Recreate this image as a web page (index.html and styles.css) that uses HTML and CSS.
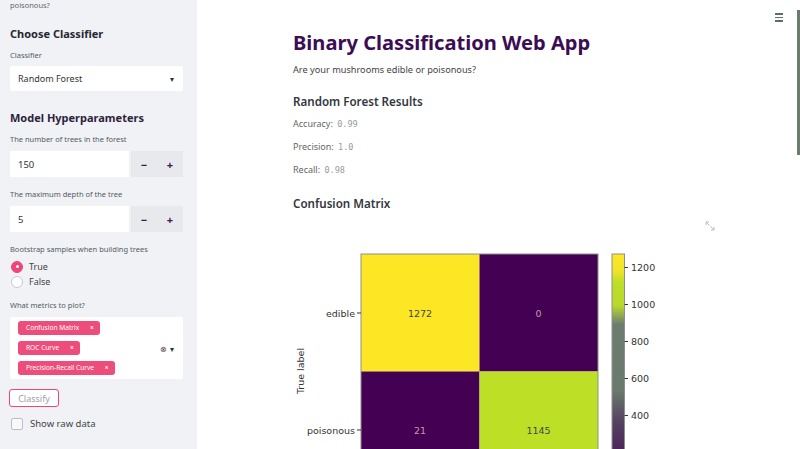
FILE: index.html
```html
<!DOCTYPE html>
<html>
<head>
<meta charset="utf-8">
<link rel="stylesheet" href="styles.css">
</head>
<body>
<div class="app">
  <aside class="sidebar">
    <p class="cut-text">poisonous?</p>
    <h3 class="side-head first">Choose Classifier</h3>
    <div class="label">Classifier</div>
    <div class="select"><span>Random Forest</span><span class="caret">▾</span></div>

    <h3 class="side-head second">Model Hyperparameters</h3>
    <div class="label">The number of trees in the forest</div>
    <div class="number-row">
      <div class="num-input">150</div>
      <div class="stepper"><span>−</span><span>+</span></div>
    </div>
    <div class="label">The maximum depth of the tree</div>
    <div class="number-row">
      <div class="num-input">5</div>
      <div class="stepper"><span>−</span><span>+</span></div>
    </div>

    <div class="label">Bootstrap samples when building trees</div>
    <div class="radio-row"><span class="radio on"></span>True</div>
    <div class="radio-row"><span class="radio"></span>False</div>

    <div class="label metrics-label">What metrics to plot?</div>
    <div class="multi">
      <div class="tags">
        <span class="tag">Confusion Matrix <b>×</b></span>
        <span class="tag">ROC Curve <b>×</b></span>
        <span class="tag">Precision-Recall Curve <b>×</b></span>
      </div>
      <div class="multi-icons"><span class="clear">⊗</span><span class="caret">▾</span></div>
    </div>

    <button class="classify">Classify</button>
    <div class="check-row"><span class="checkbox"></span>Show raw data</div>
  </aside>

  <main class="main">
    <div class="content">
      <h1 class="title">Binary Classification Web App</h1>
      <p class="subtitle">Are your mushrooms edible or poisonous?</p>
      <h3 class="section">Random Forest Results</h3>
      <p class="metric">Accuracy: <code>0.99</code></p>
      <p class="metric">Precision: <code>1.0</code></p>
      <p class="metric">Recall: <code>0.98</code></p>
      <h3 class="section cm">Confusion Matrix</h3>
      <div class="chart">
        <svg class="expand" width="10" height="10" viewBox="0 0 10 10">
          <path d="M1 1 L4 1 M1 1 L1 4 M1 1 L4.5 4.5 M9 9 L6 9 M9 9 L9 6 M9 9 L5.5 5.5" stroke="#b8bcc2" stroke-width="1" fill="none"/>
        </svg>
        <svg class="plot" width="425" height="280" viewBox="0 0 425 280">
          <defs>
            <linearGradient id="cbar" x1="0" y1="0" x2="0" y2="1">
              <stop offset="0" stop-color="#fde725"/>
              <stop offset="0.07" stop-color="#f0e42a"/>
              <stop offset="0.12" stop-color="#bddf26"/>
              <stop offset="0.22" stop-color="#b8d82c"/>
              <stop offset="0.30" stop-color="#6c7c6f"/>
              <stop offset="0.58" stop-color="#6b7a6e"/>
              <stop offset="0.72" stop-color="#54405f"/>
              <stop offset="1" stop-color="#440154"/>
            </linearGradient>
          </defs>
          <rect x="68" y="42" width="118.5" height="117.5" fill="#fde725"/>
          <rect x="186.5" y="42" width="118.5" height="117.5" fill="#440154"/>
          <rect x="68" y="159.5" width="118.5" height="117.5" fill="#440154"/>
          <rect x="186.5" y="159.5" width="118.5" height="117.5" fill="#bddf26"/>
          <rect x="68" y="42" width="237" height="235" fill="none" stroke="#8f8f8f" stroke-width="1"/>
          <line x1="64" y1="101" x2="68" y2="101" stroke="#333" stroke-width="1"/>
          <line x1="64" y1="218" x2="68" y2="218" stroke="#333" stroke-width="1"/>
          <text class="tick" x="62" y="104.5" text-anchor="end">edible</text>
          <text class="tick" x="62" y="221.5" text-anchor="end">poisonous</text>
          <text class="tick" x="0" y="0" text-anchor="middle" transform="translate(11 159) rotate(-90)">True label</text>
          <text class="cell dark" x="127" y="104.5" text-anchor="middle">1272</text>
          <text class="cell light" x="245.5" y="104.5" text-anchor="middle">0</text>
          <text class="cell light" x="127" y="221.5" text-anchor="middle">21</text>
          <text class="cell dark" x="245.5" y="221.5" text-anchor="middle">1145</text>
          <rect x="319" y="42" width="12.5" height="235" fill="url(#cbar)" stroke="#8f8f8f" stroke-width="1"/>
          <g stroke="#333" stroke-width="1">
            <line x1="331.5" y1="55.5" x2="335" y2="55.5"/>
            <line x1="331.5" y1="92.5" x2="335" y2="92.5"/>
            <line x1="331.5" y1="129.5" x2="335" y2="129.5"/>
            <line x1="331.5" y1="166.5" x2="335" y2="166.5"/>
            <line x1="331.5" y1="203.5" x2="335" y2="203.5"/>
          </g>
          <text class="tick" x="338" y="59">1200</text>
          <text class="tick" x="338" y="96">1000</text>
          <text class="tick" x="338" y="133">800</text>
          <text class="tick" x="338" y="170">600</text>
          <text class="tick" x="338" y="207">400</text>
        </svg>
      </div>
    </div>
  </main>

  <div class="hamburger"><span></span><span></span><span></span></div>
  <div class="scroll-thumb"></div>
</div>
</body>
</html>
```

FILE: styles.css
```css
* { box-sizing: border-box; }
html, body {
  margin: 0;
  padding: 0;
  width: 800px;
  height: 449px;
  overflow: hidden;
  background: #ffffff;
  font-family: "Noto Sans", "Open Sans", sans-serif;
}
.app {
  position: relative;
  display: flex;
  width: 800px;
  height: 449px;
  overflow: hidden;
}

/* Sidebar */
.sidebar {
  width: 197px;
  flex: 0 0 197px;
  background: #f0f2f6;
  padding: 0 14px 0 10px;
  display: flex;
  flex-direction: column;
  align-items: flex-start;
}
.cut-text {
  margin: 1px 0 0 0;
  font-size: 7.5px;
  line-height: 9px;
  height: 9px;
  color: #666;
}
.side-head {
  margin: 0;
  font-size: 11px;
  line-height: 14px;
  font-weight: 700;
  color: #262730;
}
.side-head.first { margin-top: 17px; }
.side-head.second { margin-top: 20px; color: #2e1f3c; }
.label {
  font-size: 7.5px;
  line-height: 10px;
  color: #555a60;
  margin-top: 9px;
}
.select {
  width: 173px;
  height: 25px;
  margin-top: 6px;
  background: #fff;
  border-radius: 2px;
  display: flex;
  align-items: center;
  justify-content: space-between;
  padding: 0 9px 0 8px;
  font-size: 9px;
  color: #333;
}
.caret { font-size: 8px; color: #333; }
.number-row {
  display: flex;
  gap: 2px;
  width: 173px;
  height: 26px;
  margin-top: 7px;
  margin-bottom: 3px;
}
.num-input {
  width: 119px;
  background: #fff;
  display: flex;
  align-items: center;
  padding-left: 8px;
  font-size: 9.5px;
  color: #333;
}
.stepper {
  flex: 1;
  background: #e8e9ed;
  display: flex;
  align-items: center;
  justify-content: space-around;
  font-size: 11px;
  font-weight: 700;
  color: #3b1a4f;
}
.radio-row {
  display: flex;
  align-items: center;
  gap: 6px;
  font-size: 9px;
  color: #444;
  height: 15px;
  margin-left: 1px;
}
.label + .radio-row { margin-top: 5px; }
.radio {
  width: 12px;
  height: 12px;
  border-radius: 50%;
  background: #fff;
  border: 1px solid #c8c8c8;
  position: relative;
}
.radio.on {
  background: #f0457a;
  border-color: #f0457a;
}
.radio.on::after {
  content: "";
  position: absolute;
  left: 3.5px;
  top: 3.5px;
  width: 3px;
  height: 3px;
  border-radius: 50%;
  background: #fff;
}
.metrics-label { margin-top: 11px; }
.multi {
  width: 173px;
  height: 62px;
  margin-top: 7px;
  background: #fff;
  border-radius: 2px;
  display: flex;
  align-items: center;
  justify-content: space-between;
  padding: 4px 9px 4px 8px;
}
.tags {
  display: flex;
  flex-direction: column;
  align-items: flex-start;
  gap: 6px;
}
.tag {
  background: #ee4c7a;
  color: #fff;
  font-size: 6.6px;
  line-height: 14px;
  height: 14px;
  border-radius: 3px;
  padding: 0 6px 0 8px;
  white-space: nowrap;
}
.tag b { font-weight: 700; margin-left: 9px; }
.multi-icons {
  display: flex;
  gap: 3px;
  align-items: center;
  color: #444;
}
.multi-icons .clear { font-size: 8px; }
.classify {
  margin-top: 10px;
  margin-left: -1px;
  width: 50px;
  height: 18px;
  background: #fff;
  border: 1px solid #f0457a;
  border-radius: 3px;
  font-family: inherit;
  font-size: 9px;
  color: #a0a0a8;
  padding: 0;
}
.check-row {
  display: flex;
  align-items: center;
  gap: 7px;
  margin-top: 10px;
  margin-left: 1px;
  font-size: 9.5px;
  color: #444;
}
.checkbox {
  width: 12px;
  height: 12px;
  border: 1px solid #bcbcc4;
  border-radius: 2px;
  background: #f8f8fa;
}

/* Main */
.main {
  flex: 1;
  padding: 30px 0 0 96px;
}
.content { width: 425px; }
.title {
  margin: 0;
  font-size: 20.1px;
  line-height: 25px;
  font-weight: 700;
  color: #3b0d54;
}
.subtitle {
  margin: 8px 0 0 0;
  font-size: 9.2px;
  line-height: 14px;
  color: #444;
}
.section {
  margin: 17px 0 0 0;
  font-size: 11.6px;
  line-height: 16px;
  font-weight: 600;
  color: #33373d;
}
.section.cm { margin-top: 19px; }
.metric {
  margin: 9px 0 0 0;
  font-size: 9px;
  line-height: 14px;
  color: #666;
}
.section + .metric { margin-top: 7px; }
code {
  font-family: "DejaVu Sans Mono", "Liberation Mono", monospace;
  font-size: 8.5px;
  color: #999;
  margin-left: 2px;
}
.chart {
  position: relative;
  margin-top: 0;
  height: 280px;
}
.plot { display: block; }
.expand {
  position: absolute;
  right: 3px;
  top: 9px;
}
.tick {
  font-family: "DejaVu Sans", sans-serif;
  font-size: 9.5px;
  fill: #333;
}
.cell {
  font-family: "DejaVu Sans", sans-serif;
  font-size: 9.5px;
}
.cell.dark { fill: #3f4650; }
.cell.light { fill: #c79aa6; }

/* overlays */
.hamburger {
  position: absolute;
  left: 775px;
  top: 13px;
  width: 8px;
  display: flex;
  flex-direction: column;
  gap: 2px;
}
.hamburger span {
  height: 1.5px;
  background: #5f6e66;
}
.scroll-thumb {
  position: absolute;
  left: 797px;
  top: 10px;
  width: 3px;
  height: 145px;
  background: #6b7b6e;
}
```
